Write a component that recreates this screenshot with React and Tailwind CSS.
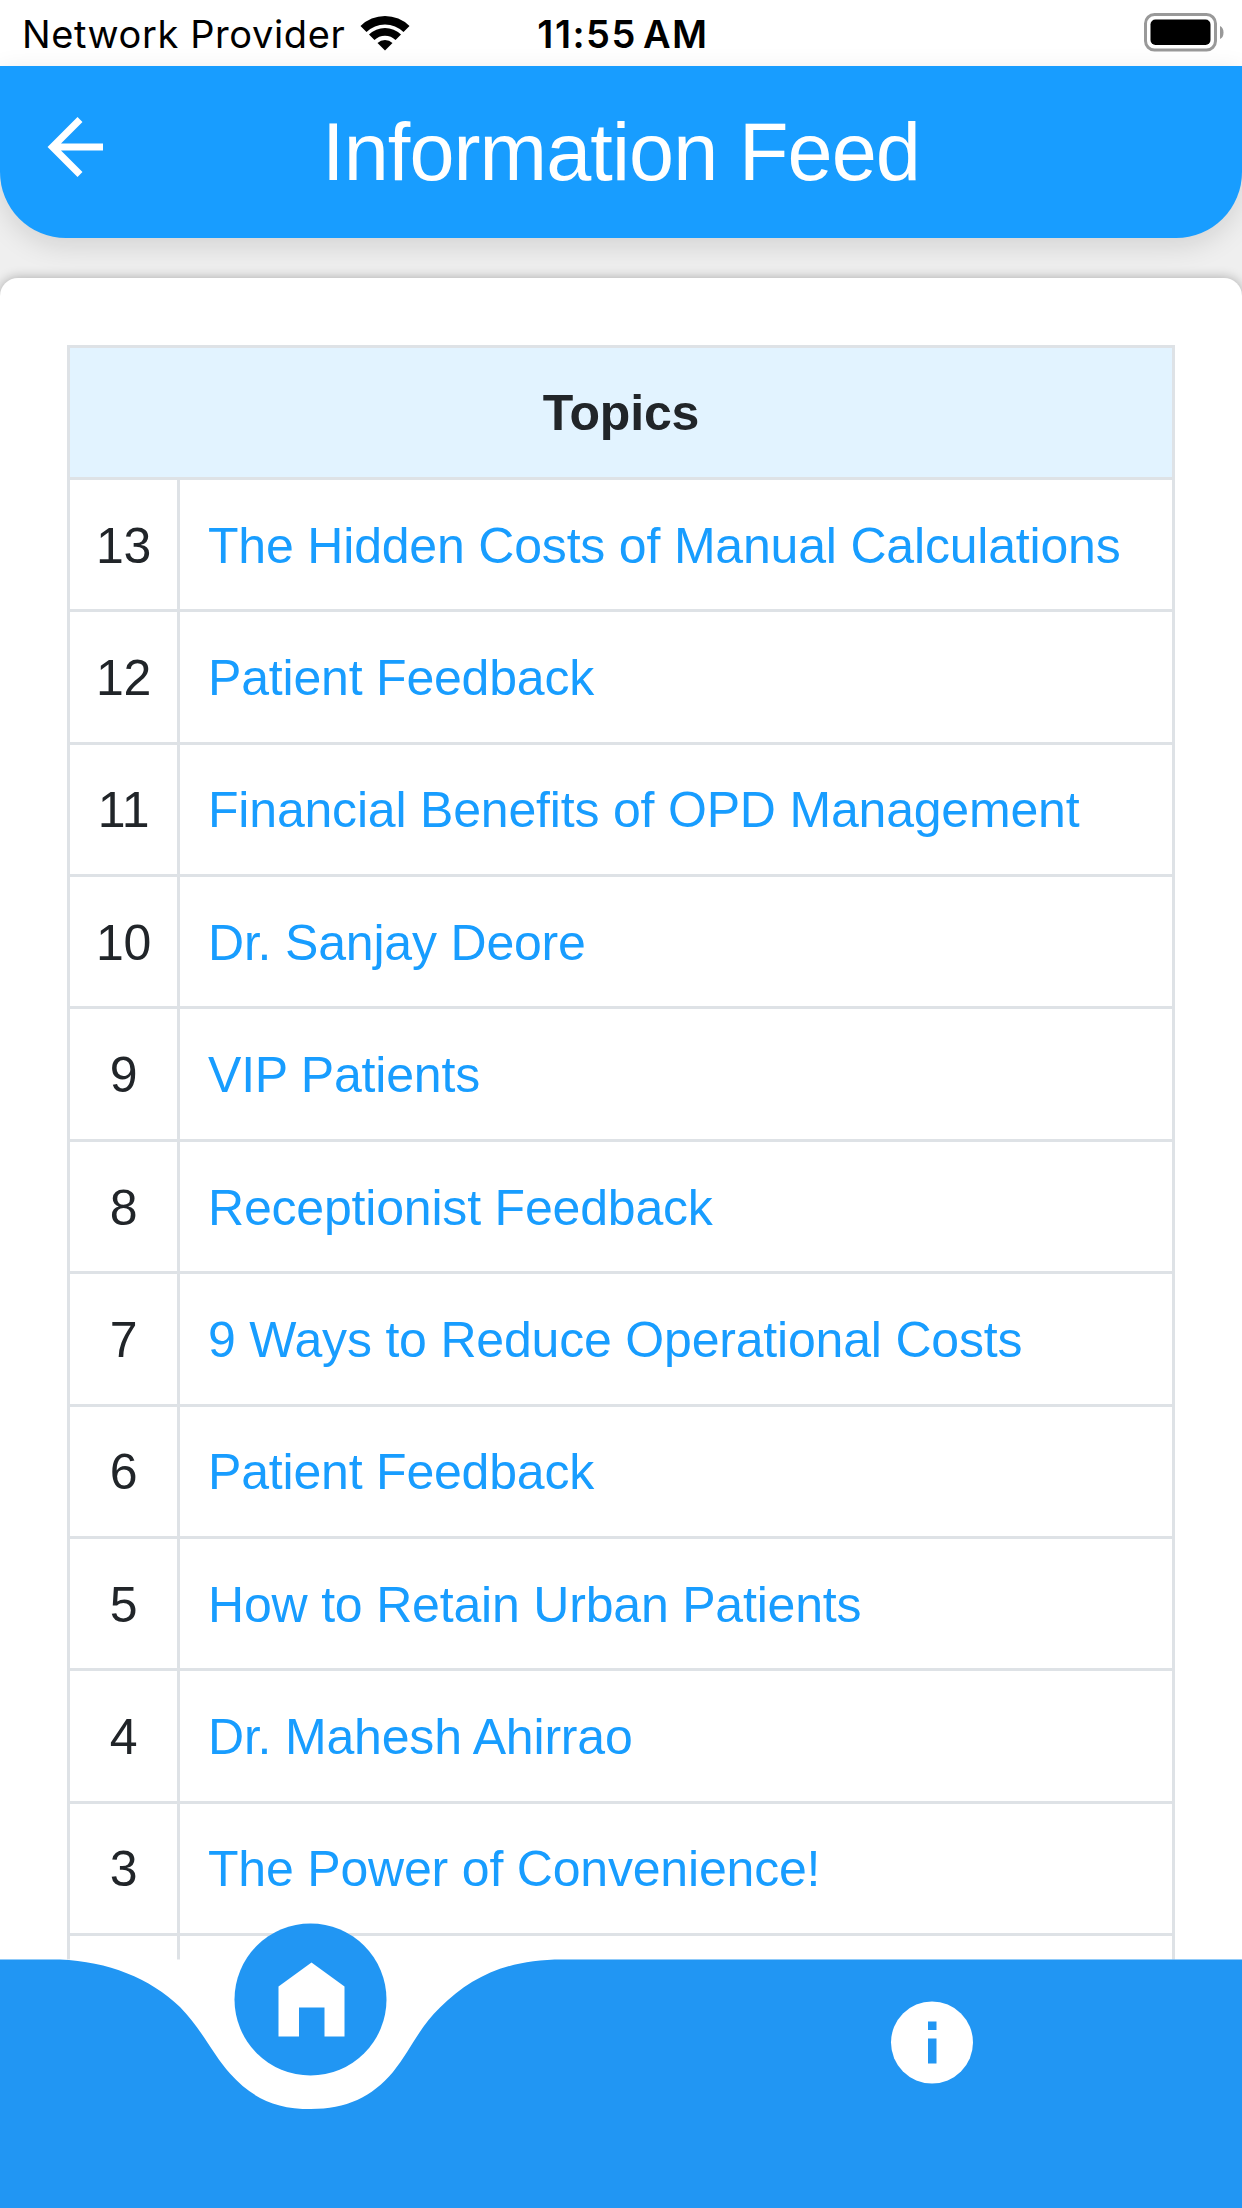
import React from 'react';

const topics = [
    { id: 13, title: 'The Hidden Costs of Manual Calculations' },
    { id: 12, title: 'Patient Feedback' },
    { id: 11, title: 'Financial Benefits of OPD Management' },
    { id: 10, title: 'Dr. Sanjay Deore' },
    { id: 9, title: 'VIP Patients' },
    { id: 8, title: 'Receptionist Feedback' },
    { id: 7, title: '9 Ways to Reduce Operational Costs' },
    { id: 6, title: 'Patient Feedback' },
    { id: 5, title: 'How to Retain Urban Patients' },
    { id: 4, title: 'Dr. Mahesh Ahirrao' },
    { id: 3, title: 'The Power of Convenience!' },
];

const StatusBar = () => (
    <div className="h-[66px] shrink-0 bg-white grid grid-cols-3 items-center pl-[22px] pr-[18px] text-black font-['Inter',sans-serif]">
        <div className="flex items-center">
            <span className="pt-[2px] text-[38px] leading-none tracking-[0.6px] whitespace-nowrap">Network Provider</span>
            <svg className="ml-[15px] shrink-0" width="50" height="38" viewBox="0 0 50 38">
                <path d="M0.500 12 A35 35 0 0 1 49.500 12 L43.500 18 A26.500 26.500 0 0 0 6.500 18 Z" />
                <path d="M9 20.500 A23 23 0 0 1 41 20.500 L35.500 26 A15 15 0 0 0 14.500 26 Z" />
                <path d="M17.500 29 A11 11 0 0 1 32.500 29 L25 36.500 Z" />
            </svg>
        </div>
        <div className="pt-[2px] text-center text-[38px] leading-none font-semibold tracking-[1.5px] [word-spacing:-5px]">11:55 AM</div>
        <svg className="justify-self-end" width="80" height="40" viewBox="0 0 80 40">
            <rect x="1.500" y="1.500" width="70" height="35.500" rx="9" fill="none" stroke="#999" strokeWidth="3" />
            <rect x="6.500" y="6.500" width="60" height="25.500" rx="5" />
            <path d="M76 13 Q79.500 14.500 79.500 19.500 Q79.500 24.500 76 26 Z" fill="#999" />
        </svg>
    </div>
);

const Header = () => (
    <header className="relative h-[172px] shrink-0 bg-[#189dff] rounded-b-[66px] shadow-[0_8px_28px_rgba(0,0,0,0.12)] grid grid-cols-[1fr_auto_1fr] items-center px-[46px] text-white">
        <button aria-label="Back" className="justify-self-start pb-[10px]">
            <svg width="58" height="60" viewBox="0 0 58 60" fill="none" stroke="white" strokeWidth="7">
                <path d="M34 2.500 L6.500 30 L34 57.500 M7 30 H57" />
            </svg>
        </button>
        <h1 className="text-[81px] leading-none tracking-[-0.9px]">Information Feed</h1>
    </header>
);

const TopicsTable = () => (
    <table className="w-full border-collapse text-[50px] leading-[60px] tracking-[-0.19px] text-[#212529]">
        <thead>
            <tr className="h-[132.4px]">
                <th colSpan={2} className="border-3 border-[#dee2e6] bg-[#e2f3ff] pt-[2px] font-bold">Topics</th>
            </tr>
        </thead>
        <tbody>
            {topics.map((topic) => (
                <tr key={topic.id} className="h-[132.4px]">
                    <td className="w-[110px] border-3 border-[#dee2e6] pt-[2px] text-center">{topic.id}</td>
                    <td className="border-3 border-[#dee2e6] pt-[2px] pl-[28px] whitespace-nowrap text-[#189dff]">
                        <a>{topic.title}</a>
                    </td>
                </tr>
            ))}
            <tr className="h-[132.4px]">
                <td className="border-3 border-[#dee2e6]"></td>
                <td className="border-3 border-[#dee2e6]"></td>
            </tr>
        </tbody>
    </table>
);

const BottomNav = () => (
    <nav className="absolute inset-x-0 bottom-0 h-[288px]">
        <svg className="block" width="1242" height="288" viewBox="0 0 1242 288">
            <rect y="39.500" width="1242" height="248.500" fill="white" />
            <path d="M0 39.500 H60 C108 41.500 150 58 180 87 C203 111 214 136 230 153.500 C252 178 275 189 311 189 C346 189 372 177 393 152 C410 131 420 106 440 87.500 C472 56 508 39.500 562 39.500 H1242 V288 H0 Z" fill="#2196f3" />
            <circle cx="310.500" cy="79.500" r="76" fill="#2196f3" />
            <path d="M311.500 42.500 L344.500 66.500 V116.500 H324.500 V87.500 H299 V116.500 H278.500 V66.500 Z" fill="white" />
            <circle cx="932" cy="122.500" r="41" fill="white" />
            <path d="M928 101.500 h8.500 v8.500 h-8.500 Z M928 118.500 h8.500 v25 h-8.500 Z" fill="#2196f3" />
        </svg>
    </nav>
);

export default function App() {
    return (
        <div className="relative w-[1242px] h-[2208px] overflow-hidden flex flex-col bg-[#efefef] font-['Liberation_Sans',Arial,sans-serif]">
            <StatusBar />
            <Header />
            <main className="mt-10 grow min-h-0 bg-white rounded-t-[18px] shadow-[0_0_12px_rgba(0,0,0,0.3)] pt-[66.5px] px-[67px]">
                <TopicsTable />
            </main>
            <BottomNav />
        </div>
    );
}
